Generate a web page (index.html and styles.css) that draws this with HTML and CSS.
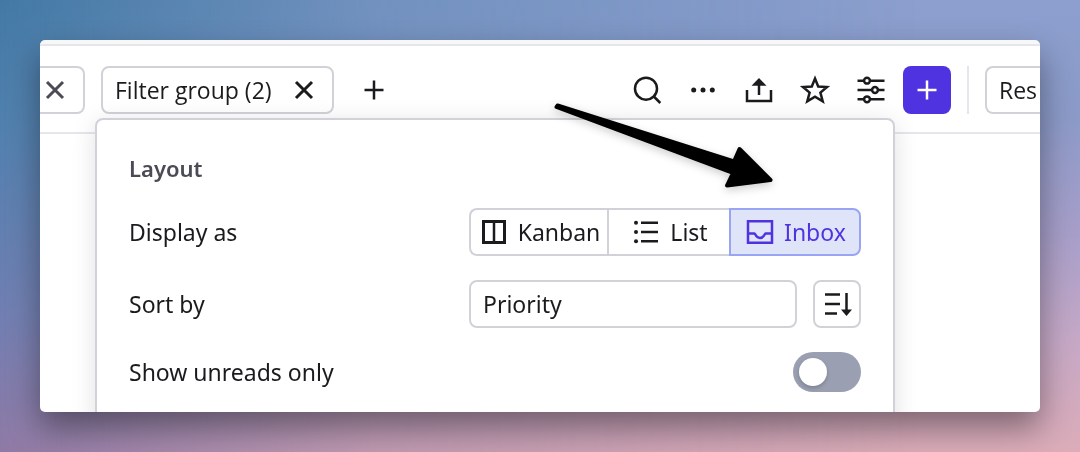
FILE: index.html
```html
<!DOCTYPE html>
<html lang="en">
<head>
<meta charset="utf-8">
<meta name="viewport" content="width=device-width, initial-scale=1">
<title>Layout settings</title>
<link rel="stylesheet" href="styles.css">
</head>
<body>
<main class="window">
  <header class="toolbar">
    <div class="filters">
      <div class="chip chip-cut">
        <button class="chip-close muted" type="button" aria-label="Remove filter"><svg width="32" height="32" viewBox="0 0 32 32"><path d="M8 8 24 24M24 8 8 24"/></svg></button>
      </div>
      <div class="chip">
        <span>Filter group (2)</span>
        <button class="chip-close" type="button" aria-label="Remove filter group"><svg width="32" height="32" viewBox="0 0 32 32"><path d="M8 8 24 24M24 8 8 24"/></svg></button>
      </div>
      <button class="icon-button" type="button" aria-label="Add filter"><svg width="32" height="32" viewBox="0 0 32 32"><path d="M16 6.500V25.500M6.500 16H25.500"/></svg></button>
    </div>
    <div class="actions">
      <button class="icon-button" type="button" aria-label="Search"><svg width="32" height="32" viewBox="0 0 32 32"><circle cx="15" cy="14.700" r="11"/><path d="M22.800 22.500 29.300 29"/></svg></button>
      <button class="icon-button" type="button" aria-label="More"><svg width="32" height="32" viewBox="0 0 32 32"><g class="solid"><circle cx="6.700" cy="16" r="2.500"/><circle cx="16" cy="16" r="2.500"/><circle cx="25.300" cy="16" r="2.500"/></g></svg></button>
      <button class="icon-button" type="button" aria-label="Share"><svg width="32" height="32" viewBox="0 0 32 32"><path d="M4 16V27H28V16M16 21V10"/><path class="solid" d="M16 4 23.500 11.700H8.500Z"/></svg></button>
      <button class="icon-button" type="button" aria-label="Favorite"><svg width="32" height="32" viewBox="0 0 32 32"><path d="M16 4.500 19.200 12.500 28 13 21.400 18.600 23.700 27.300 16 22.600 8.300 27.300 10.600 18.600 4 13 12.800 12.500Z"/></svg></button>
      <button class="icon-button" type="button" aria-label="View settings"><svg width="32" height="32" viewBox="0 0 32 32"><path d="M2.500 6.700H9M15 6.700H29.500M2.500 16H17M23 16H29.500M2.500 25.300H9M15 25.300H29.500"/><circle cx="12" cy="6.700" r="2.900"/><circle cx="20" cy="16" r="2.900"/><circle cx="12" cy="25.300" r="2.900"/></svg></button>
      <button class="icon-button primary" type="button" aria-label="Create"><svg width="32" height="32" viewBox="0 0 32 32"><path d="M16 6.500V25.500M6.500 16H25.500"/></svg></button>
      <span class="divider"></span>
      <button class="cut-button" type="button">Res</button>
    </div>
  </header>

  <section class="panel" aria-labelledby="panel-title">
    <h2 class="panel-title" id="panel-title">Layout</h2>
    <div class="row">
      <span class="label" id="display-label">Display as</span>
      <div class="segments" role="group" aria-labelledby="display-label">
        <button class="segment" type="button"><svg width="24" height="24" viewBox="0 0 24 24"><path class="bold" d="M1.500 1.500H22.500V22.500H1.500Z"/><path d="M12 1V23"/></svg>Kanban</button>
        <button class="segment" type="button"><svg width="24" height="24" viewBox="0 0 24 24"><path d="M7 2.700H24M7 12H24M7 21.300H24"/><g class="solid"><circle cx="2" cy="2.700" r="2"/><circle cx="2" cy="12" r="2"/><circle cx="2" cy="21.300" r="2"/></g></svg>List</button>
        <button class="segment selected" type="button" aria-pressed="true"><svg width="28" height="24" viewBox="0 0 28 24"><path d="M2 1.200H26V22.800H2ZM2 13.500H8.500C9.500 13.500 9.500 18 14 18S18.500 13.500 19.500 13.500H26"/></svg>Inbox</button>
      </div>
    </div>
    <div class="row">
      <label class="label" for="sort">Sort by</label>
      <div class="sort">
        <select class="select" id="sort"><option>Priority</option></select>
        <button class="sort-order" type="button" aria-label="Sort direction"><svg width="32" height="32" viewBox="0 0 32 32"><path d="M4 6.500H19M4 16H19M4 25.500H16M25.500 5V23"/><path class="solid" d="M20 21.500H31L25.500 28Z"/></svg></button>
      </div>
    </div>
    <div class="row">
      <label class="label" for="unreads">Show unreads only</label>
      <input class="toggle" id="unreads" type="checkbox" role="switch">
    </div>
  </section>

  <svg class="arrow" width="232" height="100" viewBox="0 0 232 100" aria-hidden="true"><path d="M8.500 7.500 185 63.500 190.500 51 221.500 82 178 87.500 184 75 7.500 9Z"/></svg>
</main>
</body>
</html>
```
FILE: styles.css
```css
:root {
  --ink: #1b1b1e;
  --line: #d1d1d9;
  --line-soft: #e5e5ec;
  --accent: #4f32e0;
}

* {
  box-sizing: border-box;
}

body {
  margin: 0;
  height: 100vh;
  padding: 40px;
  font: 23px/32px "Noto Sans", "Open Sans", sans-serif;
  color: var(--ink);
  background: linear-gradient(to bottom, #8c9fce 0%, #8b9ac8 25%, #a59ec9 50%, #c5a8c6 75%, #dcacb8 100%);
}

body::before {
  content: "";
  position: fixed;
  inset: 0;
  z-index: -1;
  background: linear-gradient(to bottom, #4279a4 0%, #5280ae 30%, #707eb1 70%, #8f79a5 100%);
  mask-image: linear-gradient(to right, #000, rgba(0, 0, 0, 0.35) 35%, transparent 85%);
}

button,
select {
  margin: 0;
  padding: 0;
  border: 0;
  background: none;
  font: inherit;
  color: inherit;
}

svg {
  flex: none;
  display: block;
  fill: none;
  stroke: currentColor;
  stroke-width: 2.5;
}

.solid {
  fill: currentColor;
  stroke: none;
}

.bold {
  stroke-width: 3;
}

.window {
  position: relative;
  height: 100%;
  overflow: hidden;
  border-top: 4px solid #f7f7f8;
  border-radius: 5px;
  background: #fff;
  box-shadow: 0 16px 32px rgba(0, 0, 0, 0.4);
}

.toolbar {
  display: flex;
  justify-content: space-between;
  padding: 20px 0 18px;
  border-top: 2px solid var(--line-soft);
  border-bottom: 2px solid var(--line-soft);
  font-family: "Open Sans", "Noto Sans", sans-serif;
}

.filters {
  display: flex;
  gap: 16px;
}

.chip {
  display: flex;
  align-items: center;
  gap: 16px;
  height: 48px;
  padding: 0 12px;
  border: 2px solid var(--line);
  border-radius: 8px;
}

.chip-cut {
  padding-left: 0;
  border-left: 0;
  border-radius: 0 8px 8px 0;
}

.chip-close {
  display: grid;
  place-items: center;
  width: 32px;
}

.chip-close svg {
  stroke-width: 3;
}

.chip-cut .chip-close {
  justify-content: end;
  width: 31px;
}

.muted {
  color: #4a4b55;
}

.actions {
  display: flex;
  gap: 8px;
}

.icon-button {
  display: grid;
  place-items: center;
  width: 48px;
  height: 48px;
}

.primary {
  border-radius: 8px;
  background: var(--accent);
  color: #fff;
}

.divider {
  width: 2px;
  margin: 0 8px;
  background: var(--line-soft);
}

.cut-button {
  width: 55px;
  padding-left: 12px;
  border: 2px solid var(--line);
  border-right: 0;
  border-radius: 8px 0 0 8px;
  overflow: hidden;
  text-align: left;
}

.panel {
  position: relative;
  display: flex;
  flex-direction: column;
  gap: 24px;
  margin: -16px 145px 0 55px;
  padding: 32px 32px 48px;
  border: 2px solid var(--line);
  border-radius: 8px;
  background: #fff;
  box-shadow: 0 4px 24px rgba(0, 0, 0, 0.12);
}

.panel-title {
  margin: 0;
  font-size: 22px;
  font-weight: 600;
  color: #4a4b55;
}

.row {
  display: grid;
  grid-template-columns: 340fr 392fr;
  align-items: center;
}

.segments {
  display: grid;
  grid-template-columns: 138fr 122fr 132fr;
}

.segment {
  display: flex;
  align-items: center;
  justify-content: center;
  gap: 12px;
  height: 48px;
  padding-left: 4px;
  border: 2px solid var(--line);
  border-right: 0;
}

.segment:first-child {
  border-radius: 8px 0 0 8px;
}

.segment.selected {
  gap: 10px;
  padding-left: 2px;
  border: 2px solid #98a5f5;
  border-radius: 0 8px 8px 0;
  background: #e0e4f9;
  color: var(--accent);
}

.sort {
  display: flex;
  gap: 16px;
}

.select {
  flex: 1;
  height: 48px;
  padding: 0 12px;
  border: 2px solid var(--line);
  border-radius: 8px;
  appearance: none;
}

.sort-order {
  display: grid;
  place-items: center;
  width: 48px;
  border: 2px solid var(--line);
  border-radius: 8px;
}

.toggle {
  justify-self: end;
  width: 68px;
  height: 40px;
  margin: 0;
  padding: 6px;
  border-radius: 20px;
  background: #9a9fb2;
  appearance: none;
}

.toggle::before {
  content: "";
  display: block;
  width: 28px;
  height: 28px;
  border-radius: 50%;
  background: #fff;
  box-shadow: 0 2px 4px rgba(0, 0, 0, 0.2);
}

.toggle:checked::before {
  margin-left: auto;
}

.arrow {
  position: absolute;
  top: 54px;
  right: 259px;
  fill: #000;
  stroke: #000;
  stroke-width: 4;
  stroke-linejoin: round;
  filter: drop-shadow(0 3px 4px rgba(0, 0, 0, 0.2));
}
```
